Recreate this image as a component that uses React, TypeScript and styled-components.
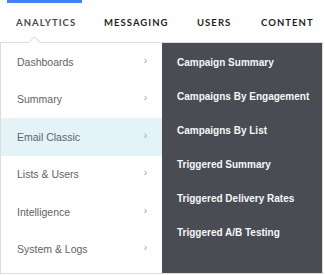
import React from "react";
import styled, { createGlobalStyle } from "styled-components";

const Global = createGlobalStyle`
  html, body { margin: 0; padding: 0; background: #fff; }
  body { font-family: "Liberation Sans", Arial, sans-serif; }
`;

const Page = styled.div`
  position: relative;
  width: 325px;
  height: 275px;
  overflow: hidden;
`;

const TopBar = styled.div`
  height: 3px;
  display: flex;
`;

const ActiveIndicator = styled.div`
  margin-left: 7px;
  width: 75px;
  height: 3px;
  background: #3f82f4;
`;

const Nav = styled.nav`
  display: flex;
  align-items: center;
  height: 36px;
  padding-left: 16px;
  margin-top: 1px;
`;

const NavItem = styled.div<{ $active?: boolean; $w: number }>`
  width: ${(p) => p.$w}px;
  flex: none;
  font-family: "Lato", "Open Sans", sans-serif;
  font-weight: 700;
  font-size: 9.5px;
  letter-spacing: 1.05px;
  color: ${(p) => (p.$active ? "#4a4a4a" : "#1e1e1e")};
  white-space: nowrap;
`;

const Dropdown = styled.div`
  position: relative;
  margin-top: 2px;
  width: 321px;
  height: 230px;
  border: 1px solid #dcdcdc;
  display: flex;
  background: #fff;
`;

const Notch = styled.div`
  position: absolute;
  top: -5px;
  left: 29px;
  width: 8px;
  height: 8px;
  background: #fff;
  border-left: 1px solid #dcdcdc;
  border-top: 1px solid #dcdcdc;
  transform: rotate(45deg);
`;

const LeftPanel = styled.ul`
  list-style: none;
  margin: 0;
  padding: 0;
  width: 161px;
  flex: none;
  background: #fff;
  position: relative;
  z-index: 1;
`;

const LeftRow = styled.li<{ $active?: boolean }>`
  height: 37.5px;
  display: flex;
  align-items: center;
  justify-content: space-between;
  padding: 0 15px 0 16px;
  font-size: 10.5px;
  color: #606367;
  background: ${(p) => (p.$active ? "#e3f3f8" : "transparent")};
`;

const Chevron = styled.span`
  font-size: 10px;
  color: #9a9da1;
  margin-top: -3px;
`;

const RightPanel = styled.ul`
  list-style: none;
  margin: 0;
  padding: 2px 0 0 15px;
  flex: 1;
  background: #4a4c54;
`;

const RightRow = styled.li`
  height: 34px;
  display: flex;
  align-items: center;
  font-size: 10px;
  font-weight: 700;
  color: #f7f7f8;
  white-space: nowrap;
`;

const left = ["Dashboards", "Summary", "Email Classic", "Lists & Users", "Intelligence", "System & Logs"];
const right = [
  "Campaign Summary",
  "Campaigns By Engagement",
  "Campaigns By List",
  "Triggered Summary",
  "Triggered Delivery Rates",
  "Triggered A/B Testing",
];

export default function App() {
  return (
    <>
      <Global />
      <Page>
        <TopBar>
          <ActiveIndicator />
        </TopBar>
        <Nav>
          <NavItem $active $w={88}>ANALYTICS</NavItem>
          <NavItem $w={93}>MESSAGING</NavItem>
          <NavItem $w={64}>USERS</NavItem>
          <NavItem $w={60}>CONTENT</NavItem>
        </Nav>
        <Dropdown>
          <Notch />
          <LeftPanel>
            {left.map((l, i) => (
              <LeftRow key={l} $active={i === 2}>
                {l}
                <Chevron>›</Chevron>
              </LeftRow>
            ))}
          </LeftPanel>
          <RightPanel>
            {right.map((r) => (
              <RightRow key={r}>{r}</RightRow>
            ))}
          </RightPanel>
        </Dropdown>
      </Page>
    </>
  );
}
